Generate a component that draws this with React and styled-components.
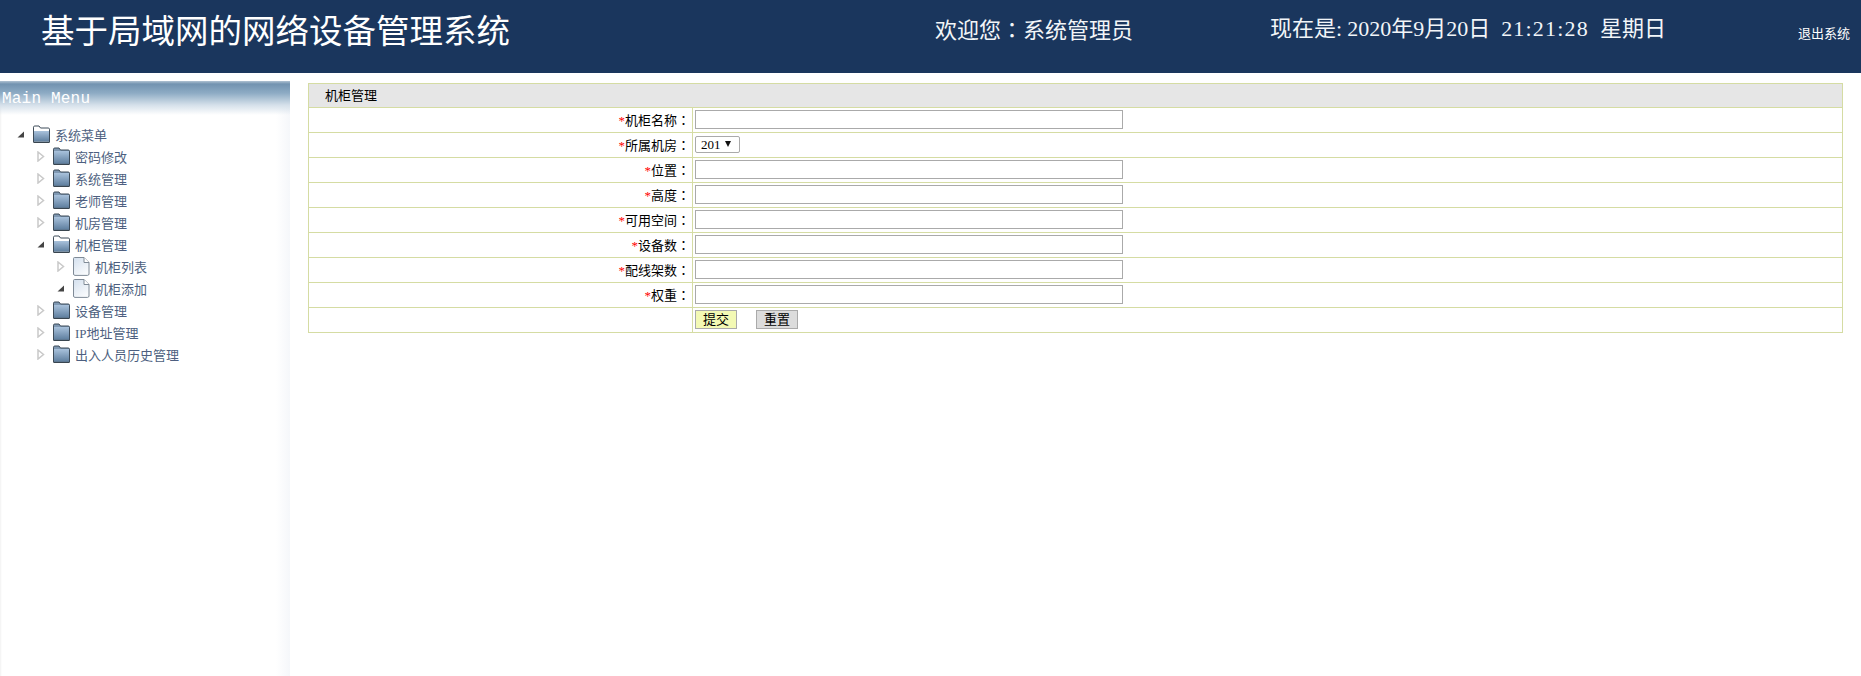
import React from "react";
import styled, { createGlobalStyle } from "styled-components";

const GlobalStyle = createGlobalStyle`
  html, body {
    margin: 0;
    padding: 0;
    height: 100%;
    overflow: hidden;
    background: #fff;
  }
  body {
    font-family: "Liberation Serif", "Noto Sans CJK SC", serif;
  }
`;

const cjk = `"Liberation Serif", "Noto Sans CJK SC", serif`;

const menu = [
  { label: "密码修改" },
  { label: "系统管理" },
  { label: "老师管理" },
  { label: "机房管理" },
  {
    label: "机柜管理",
    open: true,
    children: [{ label: "机柜列表" }, { label: "机柜添加", open: true }],
  },
  { label: "设备管理" },
  { label: "IP地址管理" },
  { label: "出入人员历史管理" },
];

const fields = ["机柜名称", "所属机房", "位置", "高度", "可用空间", "设备数", "配线架数", "权重"];

const FolderIcon = ({ open }) => (
  <svg width="18" height="18" viewBox="0 0 18 18">
    <defs>
      <linearGradient id="folderFill" x1="0" y1="0" x2="0" y2="1">
        <stop offset="0" stopColor="#a9c2dc" />
        <stop offset="1" stopColor="#5f7f9f" />
      </linearGradient>
    </defs>
    <path
      d="M1.5 17V2.2C1.5 1.5 2 1 2.7 1H7l1.5 2H16.3c.7 0 1.2.5 1.2 1.2V17z"
      fill={open ? "#fff" : "#7f98b2"}
      stroke="#3d4b58"
    />
    <rect x="2" y={open ? 6 : 4} width="15" height={open ? 10.5 : 12.5} fill="url(#folderFill)" />
    <path d="M1.5 17.5H17.5" stroke="#39454f" />
  </svg>
);

const FileIcon = () => (
  <svg width="17" height="19" viewBox="0 0 17 19">
    <defs>
      <linearGradient id="fileFill" x1="0" y1="0" x2="0.6" y2="1">
        <stop offset="0" stopColor="#d4e0ee" />
        <stop offset="1" stopColor="#f8fafc" />
      </linearGradient>
    </defs>
    <path
      d="M1.5 .5H11L16 5.500V17c0 .8-.6 1.400-1.400 1.400H1.900C1.100 18.400 .5 17.800 .5 17V1.500C.5 .9 .9 .5 1.500 .5z"
      fill="url(#fileFill)"
      stroke="#7f8a96"
    />
    <path d="M11 .5V5.500H16" fill="#fff" stroke="#7f8a96" />
  </svg>
);

const Arrow = ({ open }) => (
  <svg width="9" height="11" viewBox="0 0 9 11">
    {open ? (
      <path d="M8 2.500V8.500H1.500z" fill="#444" />
    ) : (
      <path d="M2 1L7.500 5.500 2 10z" fill="#fff" stroke="#c9c9c9" strokeWidth="1.500" />
    )}
  </svg>
);

const TreeItem = ({ item, depth, file }) => (
  <>
    <Row $depth={depth}>
      <ArrowSlot>
        <Arrow open={item.open} />
      </ArrowSlot>
      <IconSlot>{file ? <FileIcon /> : <FolderIcon open={item.open} />}</IconSlot>
      <Label>{item.label}</Label>
    </Row>
    {item.children &&
      item.children.map((c) => <TreeItem key={c.label} item={c} depth={depth + 1} file />)}
  </>
);

const App = () => {
  return (
    <>
      <GlobalStyle />
      <Header>
        <Title>基于局域网的网络设备管理系统</Title>
        <Info>
          欢迎您<Colon>：</Colon>系统管理员
        </Info>
        <Info>
          现在是<Tight $gap={5}>:</Tight>2020年9月20日 <Tight $gap={1.2}>21:21:28</Tight> 星期日
        </Info>
        <Logout>退出系统</Logout>
      </Header>
      <Main>
        <Sidebar>
          <SideHead>Main Menu</SideHead>
          <Tree>
            <TreeItem item={{ label: "系统菜单", open: true }} depth={0} />
            {menu.map((m) => (
              <TreeItem key={m.label} item={m} depth={1} />
            ))}
          </Tree>
        </Sidebar>
        <Content>
          <FormTable>
            <colgroup>
              <col width="384" />
              <col />
            </colgroup>
            <tbody>
              <tr>
                <HeadCell colSpan={2}>机柜管理</HeadCell>
              </tr>
              {fields.map((f) => (
                <tr key={f}>
                  <LabelCell>
                    <Star>*</Star>
                    {f}
                    <Colon>：</Colon>
                  </LabelCell>
                  <FieldCell>
                    {f === "所属机房" ? (
                      <SelectBox>
                        <Select defaultValue="201">
                          <option value="201">201</option>
                        </Select>
                      </SelectBox>
                    ) : (
                      <TextInput type="text" />
                    )}
                  </FieldCell>
                </tr>
              ))}
              <tr>
                <LabelCell />
                <FieldCell>
                  <Buttons>
                    <Button $primary>提交</Button>
                    <Button>重置</Button>
                  </Buttons>
                </FieldCell>
              </tr>
            </tbody>
          </FormTable>
        </Content>
      </Main>
    </>
  );
};

const Header = styled.header`
  display: grid;
  grid-template-columns: 935px 335px 528px 1fr;
  height: 73px;
  background: #1a365d;
  color: #fff;
  font-family: ${cjk};
`;

const Title = styled.h1`
  margin: 0;
  padding: 15px 0 0 41px;
  font-size: 33.500px;
  line-height: 34px;
  font-weight: 400;
`;

const Info = styled.div`
  padding-top: 16px;
  font-size: 22px;
  line-height: 25px;
  word-spacing: 5.500px;
  color: #f2f5f8;
  white-space: nowrap;
`;

const Colon = styled.span`
  font-family: "Noto Sans CJK TC", sans-serif;
`;

const Tight = styled.span`
  letter-spacing: ${(p) => p.$gap}px;
`;

const Logout = styled.a`
  padding-top: 26px;
  font-size: 13px;
  line-height: 15px;
  white-space: nowrap;
`;

const Main = styled.div`
  display: flex;
  align-items: flex-start;
  height: 603px;
`;

const Sidebar = styled.aside`
  flex: 0 0 290px;
  height: 595px;
  margin-top: 8px;
  background: linear-gradient(to right, #f2f2f2 0, #fff 2px, #fff 276px, #f5f7fa 290px);
`;

const SideHead = styled.div`
  height: 34px;
  padding-left: 2px;
  background: linear-gradient(to bottom, #b0c2d2 0, #7393b0 3px, #8dabc4 12px, #d5e0ea 24px, rgba(255, 255, 255, 0) 34px);
  color: #fff;
  font-family: "Liberation Mono", monospace;
  font-size: 16px;
  line-height: 36px;
  letter-spacing: 0.2px;
`;

const Tree = styled.div`
  padding-top: 8px;
`;

const Row = styled.div`
  display: flex;
  align-items: center;
  height: 22px;
  padding-left: ${(p) => 15 + p.$depth * 20}px;
`;

const ArrowSlot = styled.span`
  display: flex;
  align-items: center;
  justify-content: center;
  width: 10px;
  margin-right: 7px;
`;

const IconSlot = styled.span`
  display: flex;
  justify-content: flex-end;
  width: 18px;
  margin-right: 5px;
`;

const Label = styled.span`
  font-family: ${cjk};
  font-size: 13px;
  color: #4d5f80;
  white-space: nowrap;
`;

const Content = styled.main`
  flex: 1;
  padding: 10px 18px 0 18px;
`;

const FormTable = styled.table`
  width: 1535px;
  border-collapse: collapse;
  table-layout: fixed;
  font-family: ${cjk};
  font-size: 13px;
  color: #000;
`;

const HeadCell = styled.td`
  height: 21px;
  padding: 0 0 2px 16px;
  background: #e6e6e6;
  border: 1px solid #d5dca3;
`;

const LabelCell = styled.td`
  height: 22px;
  padding: 0 2px 2px 0;
  text-align: right;
  border: 1px solid #d5dca3;
`;

const FieldCell = styled.td`
  height: 22px;
  padding: 2px 0 0 2px;
  vertical-align: top;
  border: 1px solid #d5dca3;
`;

const Star = styled.span`
  color: #f00;
`;

const TextInput = styled.input`
  display: block;
  box-sizing: border-box;
  width: 428px;
  height: 19px;
  padding: 0 2px;
  border: 1px solid #aaa;
  background: #fff;
`;

const SelectBox = styled.span`
  position: relative;
  display: block;
  width: 45px;
  margin-top: 1px;
  &::after {
    content: "";
    position: absolute;
    top: 5px;
    right: 9px;
    border-style: solid;
    border-width: 6px 3px 0 3px;
    border-color: #111 transparent transparent transparent;
    pointer-events: none;
  }
`;

const Select = styled.select`
  display: block;
  box-sizing: border-box;
  width: 45px;
  height: 17px;
  padding: 0 0 0 5px;
  appearance: none;
  border: 1px solid #aaa;
  border-radius: 2px;
  background: #fff;
  font-family: ${cjk};
  font-size: 13px;
  color: #000;
`;

const Buttons = styled.div`
  display: flex;
  gap: 19px;
`;

const Button = styled.button`
  box-sizing: border-box;
  width: 42px;
  height: 19px;
  padding: 0;
  border: 1px solid #aaa;
  background: ${(p) => (p.$primary ? "#f3f9b4" : "#dcdcdc")};
  font-family: ${cjk};
  font-size: 13px;
  line-height: 17px;
  color: #000;
`;

export default App;
